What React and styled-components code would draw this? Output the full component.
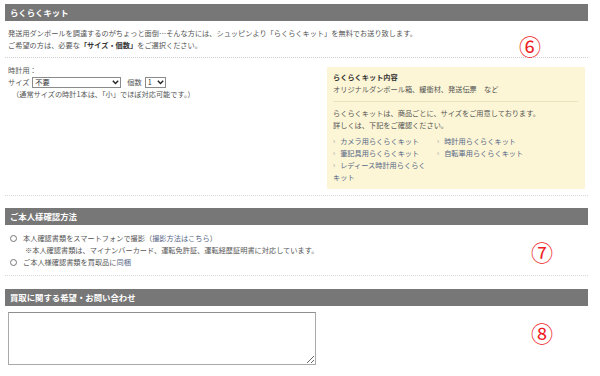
import React from "react";
import styled, { createGlobalStyle } from "styled-components";

const GlobalStyle = createGlobalStyle`
  html, body { margin: 0; padding: 0; background: #fff; }
  body {
    font-family: "Noto Sans CJK JP", "Noto Sans", sans-serif;
    color: #555;
    font-size: 7.2px;
    line-height: 12px;
  }
  * { box-sizing: border-box; }
`;

const Page = styled.div`
  position: relative;
  width: 600px;
  height: 376px;
  padding: 4px 12px 0 5px;
  overflow: hidden;
`;

const SectionHeader = styled.div`
  height: 17px;
  line-height: 17px;
  background: #777;
  color: #fff;
  font-weight: bold;
  font-size: 8.4px;
  padding-left: 5px;
  margin-top: ${(p) => p.$top || 0}px;
`;

const Intro = styled.div`
  padding: 6px 3px 6px;
  border-bottom: 1px dotted #d0d0d0;
`;

const Line = styled.div`
  white-space: nowrap;
  padding-left: ${(p) => p.$indent || 0}px;
`;

const Strong = styled.b`
  color: #333;
`;

const FormArea = styled.div`
  display: flex;
  justify-content: space-between;
  align-items: flex-start;
  padding: 6px 3px 6px;
  border-bottom: 1px dotted #d8d8d8;
`;

const LeftCol = styled.div`
  display: flex;
  flex-direction: column;
`;

const SelectRow = styled.div`
  display: flex;
  align-items: center;
  height: 12px;
  gap: 3px;
`;

const Label = styled.span`
  white-space: nowrap;
  margin-left: ${(p) => p.$ml || 0}px;
`;

const SelectWrap = styled.span`
  position: relative;
  display: inline-block;
  width: ${(p) => p.$w}px;
  height: 11px;
`;

const Select = styled.select`
  appearance: none;
  -webkit-appearance: none;
  width: 100%;
  height: 11px;
  border: 1px solid #8a8a8a;
  border-radius: 0;
  background: #fff;
  font-family: "Noto Sans CJK JP", sans-serif;
  font-size: 7.2px;
  line-height: 9px;
  color: #333;
  padding: 0 0 0 2px;
  margin: 0;
  display: block;
`;

const Chevron = styled.svg`
  position: absolute;
  right: 2px;
  top: 3px;
  width: 7px;
  height: 5px;
  pointer-events: none;
`;

const Note = styled.div`
  padding-left: 4px;
  white-space: nowrap;
`;

const KitBox = styled.div`
  width: 258px;
  margin-top: 3px;
  background: #fcf5d6;
  padding: 4px 7px 6px 6px;
`;

const KitHead = styled.div`
  padding-bottom: 6px;
  border-bottom: 1px solid #ece3bd;
`;

const KitTitle = styled.div`
  font-weight: bold;
  color: #333;
`;

const KitText = styled.div`
  padding-top: 5px;
`;

const LinkGrid = styled.div`
  display: grid;
  grid-template-columns: 96px 1fr;
  column-gap: 8px;
  margin-top: 4px;
`;

const KitLink = styled.a`
  color: #566785;
  text-decoration: none;
  &::before {
    content: "›";
    color: #999;
    margin-right: 5px;
  }
`;

const RadioList = styled.div`
  padding: 7px 3px 7px 5px;
  border-bottom: 1px dotted #d8d8d8;
`;

const RadioRow = styled.label`
  display: flex;
  align-items: center;
  gap: 6px;
  white-space: nowrap;
  height: 12px;
`;

const Radio = styled.input.attrs({ type: "radio" })`
  appearance: none;
  -webkit-appearance: none;
  width: 7px;
  height: 7px;
  border: 1px solid #777;
  border-radius: 50%;
  margin: 0;
  background: #fff;
`;

const InlineLink = styled.span`
  color: #566785;
`;

const TextArea = styled.textarea`
  display: block;
  width: 308px;
  height: 53px;
  margin: 6px 0 0 3px;
  border: 1px solid #a9a9a9;
  border-top-color: #8f8f8f;
  border-radius: 0;
  padding: 2px;
  font-family: "Noto Sans CJK JP", sans-serif;
  font-size: 7.2px;
`;

const Annotation = styled.span`
  position: absolute;
  left: ${(p) => p.$x - 12}px;
  top: ${(p) => p.$y - 12}px;
  width: 24px;
  height: 24px;
  display: flex;
  align-items: center;
  justify-content: center;
  color: #ee1c25;
  font-size: 22px;
  line-height: 1;
  font-family: "Noto Sans CJK JP", sans-serif;
`;

const ChevronIcon = () => (
  <Chevron viewBox="0 0 7 5">
    <path d="M0.8 0.8 L3.5 3.6 L6.2 0.8" fill="none" stroke="#222" strokeWidth="1.4" />
  </Chevron>
);

export default function App() {
  return (
    <>
      <GlobalStyle />
      <Page>
        <SectionHeader>らくらくキット</SectionHeader>
        <Intro>
          <Line>
            発送用ダンボールを調達するのがちょっと面倒…そんな方には、シュッピンより「らくらくキット」を無料でお送り致します。
          </Line>
          <Line>
            ご希望の方は、必要な<Strong>「サイズ・個数」</Strong>をご選択ください。
          </Line>
        </Intro>
        <FormArea>
          <LeftCol>
            <Line>時計用：</Line>
            <SelectRow>
              <Label>サイズ</Label>
              <SelectWrap $w={89}>
                <Select defaultValue="none">
                  <option value="none">不要</option>
                  <option value="s">小</option>
                </Select>
                <ChevronIcon />
              </SelectWrap>
              <Label $ml={3}>個数</Label>
              <SelectWrap $w={21}>
                <Select defaultValue="1">
                  <option value="1">1</option>
                  <option value="2">2</option>
                </Select>
                <ChevronIcon />
              </SelectWrap>
            </SelectRow>
            <Note>（通常サイズの時計1本は、「小」でほぼ対応可能です。）</Note>
          </LeftCol>
          <KitBox>
            <KitHead>
              <KitTitle>らくらくキット内容</KitTitle>
              <Line>オリジナルダンボール箱、緩衝材、発送伝票　など</Line>
            </KitHead>
            <KitText>
              <Line>らくらくキットは、商品ごとに、サイズをご用意しております。</Line>
              <Line>詳しくは、下記をご確認ください。</Line>
            </KitText>
            <LinkGrid>
              <KitLink>カメラ用らくらくキット</KitLink>
              <KitLink>時計用らくらくキット</KitLink>
              <KitLink>筆記具用らくらくキット</KitLink>
              <KitLink>自転車用らくらくキット</KitLink>
              <KitLink>レディース時計用らくらくキット</KitLink>
            </LinkGrid>
          </KitBox>
        </FormArea>

        <SectionHeader $top={12}>ご本人様確認方法</SectionHeader>
        <RadioList>
          <RadioRow>
            <Radio name="verify" />
            <span>
              本人確認書類をスマートフォンで撮影（<InlineLink>撮影方法はこちら</InlineLink>）
            </span>
          </RadioRow>
          <Line $indent={15}>
            ※本人確認書類は、マイナンバーカード、運転免許証、運転経歴証明書に対応しています。
          </Line>
          <RadioRow>
            <Radio name="verify" />
            <span>
              ご本人様確認書類を買取品に<InlineLink>同梱</InlineLink>
            </span>
          </RadioRow>
        </RadioList>

        <SectionHeader $top={13}>買取に関する希望・お問い合わせ</SectionHeader>
        <TextArea />

        <Annotation $x={530} $y={45}>⑥</Annotation>
        <Annotation $x={542} $y={251}>⑦</Annotation>
        <Annotation $x={542} $y={332}>⑧</Annotation>
      </Page>
    </>
  );
}
